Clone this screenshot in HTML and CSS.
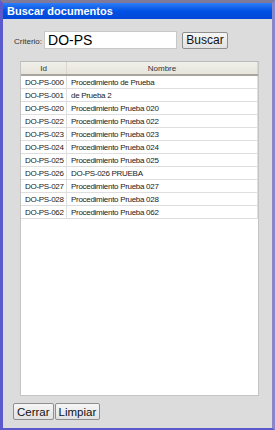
FILE: index.html
```html
<!DOCTYPE html>
<html lang="es">
<head>
    <meta charset="UTF-8">
    <title>Buscar documentos</title>
    <link rel="stylesheet" href="styles.css">
</head>
<body>
    <div class="window">
        <div class="title-bar">Buscar documentos</div>
        <div class="content">
            <div class="search-row">
                <label class="label">Criterio:</label>
                <input class="criteria" type="text" value="DO-PS">
                <button class="btn btn-search">Buscar</button>
            </div>

            <div class="table-box">
                <table class="results">
                    <thead>
                        <tr><th class="col-id">Id</th><th>Nombre</th></tr>
                    </thead>
                    <tbody>
                        <tr><td>DO-PS-000</td><td>Procedimiento de Prueba</td></tr>
                        <tr><td>DO-PS-001</td><td>de Prueba 2</td></tr>
                        <tr><td>DO-PS-020</td><td>Procedimiento Prueba 020</td></tr>
                        <tr><td>DO-PS-022</td><td>Procedimiento Prueba 022</td></tr>
                        <tr><td>DO-PS-023</td><td>Procedimiento Prueba 023</td></tr>
                        <tr><td>DO-PS-024</td><td>Procedimiento Prueba 024</td></tr>
                        <tr><td>DO-PS-025</td><td>Procedimiento Prueba 025</td></tr>
                        <tr><td>DO-PS-026</td><td>DO-PS-026 PRUEBA</td></tr>
                        <tr><td>DO-PS-027</td><td>Procedimiento Prueba 027</td></tr>
                        <tr><td>DO-PS-028</td><td>Procedimiento Prueba 028</td></tr>
                        <tr><td>DO-PS-062</td><td>Procedimiento Prueba 062</td></tr>
                    </tbody>
                </table>
            </div>

            <div class="actions">
                <button class="btn">Cerrar</button>
                <button class="btn">Limpiar</button>
            </div>
        </div>
    </div>
</body>
</html>
```

FILE: styles.css
```css
html, body {
    margin: 0;
    padding: 0;
    height: 100%;
}

body {
    background: #dcdcdc;
    font-family: "Liberation Sans", Arial, sans-serif;
}

.window {
    box-sizing: border-box;
    width: 275px;
    height: 430px;
    border-left: 3px solid #5a5acd;
    border-right: 3px solid #8a86c8;
    border-bottom: 2px solid #5a5acd;
    border-top: 3px solid #7f7a9a;
    display: flex;
    flex-direction: column;
    background: #dcdcdc;
}

.title-bar {
    height: 16px;
    line-height: 16px;
    padding-left: 4px;
    background: linear-gradient(#2f7ef5, #0052e6 50%, #0047d6);
    color: #fff;
    font-weight: bold;
    font-size: 11px;
}

.content {
    flex: 1;
    display: flex;
    flex-direction: column;
    padding: 12px 14px 7px 9px;
}

.search-row {
    display: flex;
    align-items: center;
    height: 18px;
}

.label {
    font-size: 8px;
    color: #333;
    margin: 3px 2px 0 2px;
}

.criteria {
    box-sizing: border-box;
    width: 133px;
    height: 18px;
    border: 1px solid #c8c8c8;
    padding: 0 3px;
    font-family: "Liberation Sans", Arial, sans-serif;
    font-size: 14px;
    color: #000;
    background: #fff;
}

.btn {
    box-sizing: border-box;
    height: 17px;
    padding: 0 3px;
    border: 1px solid #8f8f8f;
    border-radius: 2px;
    background: linear-gradient(#f6f6f6, #e2e2e2);
    font-family: "Liberation Sans", Arial, sans-serif;
    font-size: 11.5px;
    color: #111;
}

.btn-search {
    margin-left: 5px;
    width: 46px;
    font-size: 12px;
}

.table-box {
    box-sizing: border-box;
    flex: 1;
    margin: 12px 0 0 8px;
    width: 239px;
    background: #fff;
    border: 1px solid #c4c4c4;
    border-top-color: #bbb;
    max-height: 335px;
}

.results {
    width: 100%;
    table-layout: fixed;
    border-collapse: collapse;
    font-size: 8px;
    letter-spacing: -0.3px;
    color: #222;
}

.results th {
    height: 12px;
    padding: 0;
    font-weight: normal;
    letter-spacing: 0;
    color: #333;
    background: linear-gradient(#f0efe9, #e6e4dc);
    border-bottom: 2px solid #a8a69c;
    border-right: 1px solid #d8d6cd;
    text-align: center;
}

.results .col-id {
    width: 45px;
}

.results td {
    height: 12px;
    padding: 0 2px 0 4px;
    border-bottom: 1px solid #dedede;
    border-right: 1px solid #dedede;
    white-space: nowrap;
    overflow: hidden;
}

.actions {
    display: flex;
    gap: 1px;
    margin-top: 7px;
    padding-left: 1px;
}
```
